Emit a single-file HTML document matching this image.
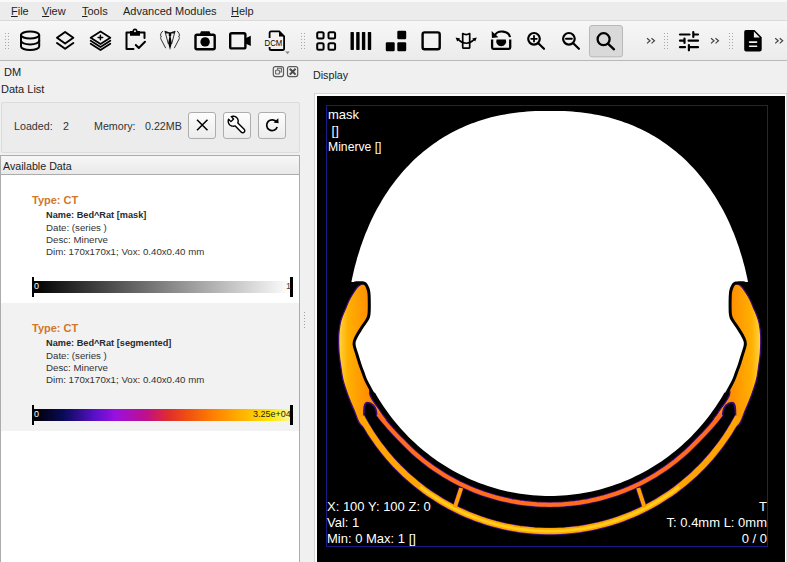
<!DOCTYPE html>
<html><head><meta charset="utf-8">
<style>
*{margin:0;padding:0;box-sizing:border-box}
html,body{width:787px;height:562px;overflow:hidden;background:#f0f0f0;font-family:"Liberation Sans",sans-serif;color:#000}
.a{position:absolute}
.t{position:absolute;white-space:nowrap;line-height:1}
#menubar{left:0;top:0;width:787px;height:20px;background:#ececec;border-top:2px solid #f8f8f8}
#menubar .t{font-size:11px;color:#1e1e1e}
#menubar u{text-decoration:underline;text-decoration-thickness:1px;text-underline-offset:0.5px;text-decoration-color:#1e1e1e}
#toolbar{left:0;top:20px;width:787px;height:41px;background:linear-gradient(#f7f7f7,#ebebeb);border-top:1px solid #dadada;border-bottom:1px solid #b8b8b8}
.btn{position:absolute;width:28px;height:27px;border:1px solid #adadad;border-radius:3px;background:linear-gradient(#fdfdfd,#ececec)}
.info{font-size:9.7px;color:#333}
.nm{font-size:9.2px;font-weight:bold;color:#2a2a2a}
.ty{font-size:11px;font-weight:bold;color:#d2762a}
.ov{position:absolute;white-space:nowrap;color:#fff;font-size:13px;line-height:1}
</style></head><body>
<div id="menubar" class="a">
 <span class="t" style="left:11px;top:4px"><u>F</u>ile</span>
 <span class="t" style="left:42px;top:4px"><u>V</u>iew</span>
 <span class="t" style="left:82px;top:4px"><u>T</u>ools</span>
 <span class="t" style="left:123px;top:4px">Advanced Modules</span>
 <span class="t" style="left:231px;top:4px"><u>H</u>elp</span>
</div>
<div id="toolbar" class="a"></div>
<!-- toolbar icons -->
<svg class="a" style="left:0;top:0" width="787" height="62" viewBox="0 0 787 62">
 <g fill="#a8a8a8">
  <rect x="5" y="33" width="1" height="1"/><rect x="8" y="33" width="1" height="1"/>
  <rect x="5" y="36" width="1" height="1"/><rect x="8" y="36" width="1" height="1"/>
  <rect x="5" y="39" width="1" height="1"/><rect x="8" y="39" width="1" height="1"/>
  <rect x="5" y="42" width="1" height="1"/><rect x="8" y="42" width="1" height="1"/>
  <rect x="5" y="45" width="1" height="1"/><rect x="8" y="45" width="1" height="1"/>
  <rect x="5" y="48" width="1" height="1"/><rect x="8" y="48" width="1" height="1"/>
  <rect x="301" y="33" width="1" height="1"/><rect x="304" y="33" width="1" height="1"/>
  <rect x="301" y="36" width="1" height="1"/><rect x="304" y="36" width="1" height="1"/>
  <rect x="301" y="39" width="1" height="1"/><rect x="304" y="39" width="1" height="1"/>
  <rect x="301" y="42" width="1" height="1"/><rect x="304" y="42" width="1" height="1"/>
  <rect x="301" y="45" width="1" height="1"/><rect x="304" y="45" width="1" height="1"/>
  <rect x="301" y="48" width="1" height="1"/><rect x="304" y="48" width="1" height="1"/>
  <rect x="664" y="33" width="1" height="1"/><rect x="667" y="33" width="1" height="1"/>
  <rect x="664" y="36" width="1" height="1"/><rect x="667" y="36" width="1" height="1"/>
  <rect x="664" y="39" width="1" height="1"/><rect x="667" y="39" width="1" height="1"/>
  <rect x="664" y="42" width="1" height="1"/><rect x="667" y="42" width="1" height="1"/>
  <rect x="664" y="45" width="1" height="1"/><rect x="667" y="45" width="1" height="1"/>
  <rect x="664" y="48" width="1" height="1"/><rect x="667" y="48" width="1" height="1"/>
  <rect x="729" y="33" width="1" height="1"/><rect x="732" y="33" width="1" height="1"/>
  <rect x="729" y="36" width="1" height="1"/><rect x="732" y="36" width="1" height="1"/>
  <rect x="729" y="39" width="1" height="1"/><rect x="732" y="39" width="1" height="1"/>
  <rect x="729" y="42" width="1" height="1"/><rect x="732" y="42" width="1" height="1"/>
  <rect x="729" y="45" width="1" height="1"/><rect x="732" y="45" width="1" height="1"/>
  <rect x="729" y="48" width="1" height="1"/><rect x="732" y="48" width="1" height="1"/>
 </g>
 <g fill="none" stroke="#000" stroke-width="2" stroke-linecap="round" stroke-linejoin="round">
  <!-- database -->
  <ellipse cx="30.1" cy="35" rx="9.1" ry="3.6"/>
  <path d="M21 35 V46.5 A9.1 3.6 0 0 0 39.2 46.5 V35"/>
  <path d="M21 40.8 A9.1 3.6 0 0 0 39.2 40.8"/>
  <!-- layers -->
  <path d="M65.1 32 L73.3 37.8 L65.1 43.5 L57 37.8 Z"/>
  <path d="M57 43 L65.1 48.7 L73.3 43"/>
  <!-- stack plus -->
  <path d="M100.5 31.5 L110.3 37.8 L100.5 44 L90.7 37.8 Z" stroke-width="1.8"/>
  <path d="M90.7 40.8 L100.5 47 L110.3 40.8" stroke-width="1.8"/>
  <path d="M90.7 43.8 L100.5 50 L110.3 43.8" stroke-width="1.8"/>
  <path d="M100.4 35.2 V39.8 M98.1 37.5 H102.7" stroke-width="1.5"/>
  <!-- clipboard -->
  <path d="M130.5 32.5 H126.5 V49 H133.5"/>
  <path d="M139.5 32.5 H144.5 V38"/>
  <path d="M135.8 45 L138.8 48 L145 41.8"/>
 </g>
 <path d="M130 31 H132.5 A2.5 2.5 0 0 1 137.5 31 H140 V35.8 H130 Z" fill="#000"/>
 <circle cx="135" cy="31.3" r="1" fill="#f2f2f2"/>
 <!-- tuxedo -->
 <g fill="none" stroke="#333" stroke-width="1" stroke-linecap="round">
  <path d="M162.6 31.2 Q160.4 33.2 160.4 35.6 L161.4 36 Q160.3 37.2 160.8 38.8 L165.5 47.8"/>
  <path d="M177.4 31.2 Q179.6 33.2 179.6 35.6 L178.6 36 Q179.7 37.2 179.2 38.8 L174.5 47.8"/>
  <path d="M165 31.4 L168.2 43.5 M175 31.4 L171.8 43.5"/>
 </g>
 <path d="M164.8 30.8 L170 32.6 L175.2 30.8 L174.6 33.6 L170 33.4 L165.4 33.6 Z" fill="#111"/>
 <path d="M168.8 32.8 H171.2 L171.3 35.5 L170.6 36.5 L171.8 43 L170 50 L168.2 43 L169.4 36.5 L168.7 35.5 Z" fill="#000"/>
 <!-- camera -->
 <rect x="195.5" y="34.7" width="19.2" height="14.5" rx="1.5" fill="none" stroke="#000" stroke-width="2.4"/>
 <path d="M199.5 35 L201 31.3 H209.5 L211 35 Z" fill="#000"/>
 <circle cx="205.1" cy="41.9" r="4.7" fill="#000"/>
 <!-- video -->
 <rect x="230.2" y="33.3" width="15.2" height="15.1" rx="1.5" fill="none" stroke="#000" stroke-width="2.4"/>
 <path d="M245 38.5 L250.8 35.7 V45.9 L245 43.2 Z" fill="#000"/>
 <!-- DCM -->
 <path d="M269.6 38 V33 A1.6 1.6 0 0 1 271.2 31.4 H279.2 L284.1 36.4 V48.4 A1.6 1.6 0 0 1 282.5 50 H271.2 A1.6 1.6 0 0 1 269.6 48.4 V47" fill="none" stroke="#000" stroke-width="1.8"/>
 <path d="M279 31.4 L284.2 36.6 H279 Z" fill="#000"/>
 <text x="264.6" y="45.7" font-family="Liberation Sans" font-size="9.4" fill="#000" stroke="#f4f4f4" stroke-width="1.6" paint-order="stroke" textLength="17.6" lengthAdjust="spacingAndGlyphs">DCM</text>
 <path d="M285.2 51.6 H289.8 L287.5 54 Z" fill="#808080"/>
 <!-- grid 2x2 -->
 <g fill="none" stroke="#000" stroke-width="2">
  <rect x="317.2" y="32.2" width="6.4" height="6.4" rx="1.5"/>
  <rect x="328.5" y="32.2" width="6.6" height="6.4" rx="1.5"/>
  <rect x="317.2" y="43.2" width="6.4" height="6.6" rx="1.5"/>
  <rect x="328.5" y="43.2" width="6.6" height="6.6" rx="1.5"/>
 </g>
 <!-- bars -->
 <g fill="#000">
  <rect x="350.5" y="32.1" width="3.4" height="17.8" rx="0.6"/>
  <rect x="356.2" y="32.1" width="3.4" height="17.8" rx="0.6"/>
  <rect x="361.9" y="32.1" width="3.4" height="17.8" rx="0.6"/>
  <rect x="367.8" y="32.1" width="3.4" height="17.8" rx="0.6"/>
  <!-- 3 squares -->
  <rect x="397.3" y="30.8" width="8.9" height="8.4" rx="1.2"/>
  <rect x="385.8" y="42.3" width="8.9" height="8.9" rx="1.2"/>
  <rect x="397.3" y="42.3" width="8.9" height="8.9" rx="1.2"/>
 </g>
 <rect x="422.6" y="32.4" width="17.1" height="16.8" rx="2" fill="none" stroke="#000" stroke-width="2.4"/>
 <!-- tilt -->
 <g fill="none" stroke="#000" stroke-width="1.7" stroke-linejoin="round">
  <path d="M462.7 33.6 V47.2 A1 1 0 0 0 463.7 48.2 H468.7 A1 1 0 0 0 469.7 47.2 V33.6 Q466.2 35.6 462.7 33.6 Z"/>
  <path d="M457.6 38.9 Q466.2 47.6 474.8 38.9" stroke-width="1.5"/>
 </g>
 <path d="M455.6 37.4 L460.2 38.4 L457.2 41.4 Z M476.8 37.4 L472.2 38.4 L475.2 41.4 Z" fill="#000"/>
 <!-- reset -->
 <path d="M492.1 39.4 V47.6 A1.2 1.2 0 0 0 493.3 48.8 H509 A1.2 1.2 0 0 0 510.2 47.6 V39.4" fill="none" stroke="#000" stroke-width="2.3"/>
 <path d="M496.6 39.4 H505.8 A5 5 0 1 1 496.6 39.4 Z" fill="#000"/>
 <path d="M494.6 35.6 A8 6.4 0 0 1 510 37.2" fill="none" stroke="#000" stroke-width="2.2"/>
 <path d="M491.6 31 L491.9 37.9 L498.4 37.3 Z" fill="#000"/>
 <!-- zoom in/out -->
 <g fill="none" stroke="#000" stroke-width="2.2" stroke-linecap="round">
  <circle cx="534" cy="38.8" r="5.8"/>
  <path d="M538.3 43.2 L544 48.8"/>
  <path d="M534 36 V41.6 M531.2 38.8 H536.8" stroke-width="1.8"/>
  <circle cx="568.9" cy="38.8" r="5.8"/>
  <path d="M573.2 43.2 L578.9 48.8"/>
  <path d="M566 38.8 H571.8" stroke-width="2"/>
 </g>
 <rect x="589.5" y="25.5" width="33" height="31.3" rx="2.5" fill="#d9d9d9" stroke="#b9b9b9" stroke-width="1"/>
 <g fill="none" stroke="#000" stroke-width="2.3" stroke-linecap="round">
  <circle cx="603.6" cy="39.2" r="6"/>
  <path d="M608.2 43.8 L614 49.3"/>
 </g>
 <!-- chevrons -->
 <g fill="none" stroke="#444" stroke-width="1.2">
  <path d="M647 38.2 L650 40.8 L647 43.4 M651.5 38.2 L654.5 40.8 L651.5 43.4"/>
  <path d="M711 38.2 L714 40.8 L711 43.4 M715.5 38.2 L718.5 40.8 L715.5 43.4"/>
  <path d="M775.2 38.2 L778.2 40.8 L775.2 43.4 M779.7 38.2 L782.7 40.8 L779.7 43.4"/>
 </g>
 <!-- sliders -->
 <g fill="none" stroke="#000" stroke-width="2.2" stroke-linecap="round">
  <path d="M680 34.5 H689.5 M693.3 32 V37 M693.3 34.5 H698"/>
  <path d="M680 40.7 H684.5 M684.5 38.6 V43 M688.6 40.7 H698"/>
  <path d="M680 47.2 H685 M688.9 45 V50.3 M688.9 47.2 H698"/>
 </g>
 <!-- doc -->
 <path d="M746 30 H754.5 L761.7 37.2 V49.5 A2 2 0 0 1 759.7 51.5 H746.2 A2 2 0 0 1 744.2 49.5 V32 A2 2 0 0 1 746 30 Z" fill="#000"/>
 <path d="M753.9 31.6 L759.8 37.5 H753.9 Z" fill="#f0f0f0"/>
 <g stroke="#f0f0f0" stroke-width="1.6" stroke-linecap="round"><path d="M749.6 42.1 H756.6 M749.6 46.2 H756.6"/></g>
</svg>

<!-- left dock -->
<div class="t" style="left:4px;top:67px;font-size:11px;color:#222">DM</div>
<svg class="a" style="left:272px;top:65px" width="28" height="13" viewBox="0 0 28 13">
 <rect x="1.3" y="1.6" width="10.2" height="10" rx="2" fill="none" stroke="#5a5a5a" stroke-width="1.2"/>
 <path d="M5.6 4.8 V3.2 H9.4 V7 H7.4" fill="none" stroke="#666" stroke-width="1.1"/>
 <rect x="3.6" y="5.2" width="3.8" height="3.8" rx="0.6" fill="none" stroke="#666" stroke-width="1.1"/>
 <rect x="15.5" y="1.6" width="10.2" height="10" rx="2" fill="none" stroke="#5a5a5a" stroke-width="1.2"/>
 <path d="M17.8 3.8 L23.6 9.6 M23.6 3.8 L17.8 9.6" stroke="#4a4a4a" stroke-width="2"/>
</svg>
<div class="t" style="left:1px;top:84px;font-size:11px;color:#222">Data List</div>
<div class="a" style="left:1px;top:102px;width:299px;height:51px;border:1px solid #dcdcdc;border-radius:2px;background:#ececec"></div>
<div class="t" style="left:14px;top:121px;font-size:10.7px;color:#333">Loaded:</div>
<div class="t" style="left:63px;top:121px;font-size:10.7px;color:#333">2</div>
<div class="t" style="left:94px;top:121px;font-size:10.7px;color:#333">Memory:</div>
<div class="t" style="left:145px;top:121px;font-size:10.7px;color:#333">0.22MB</div>
<div class="btn" style="left:188px;top:112px"></div>
<div class="btn" style="left:223px;top:112px"></div>
<div class="btn" style="left:258px;top:112px"></div>
<svg class="a" style="left:188px;top:112px" width="100" height="27" viewBox="0 0 100 27">
 <path d="M9 7.8 L19.5 18.3 M19.5 7.8 L9 18.3" stroke="#000" stroke-width="1.5"/>
 <path d="M45.62 6.94 L43.27 4.59 L44.07 4.33 L44.89 4.21 L45.73 4.23 L46.55 4.39 L47.33 4.68 L48.05 5.09 L48.70 5.63 L49.24 6.26 L49.68 6.97 L49.98 7.75 L50.16 8.56 L50.20 9.40 L50.09 10.23 L49.85 11.03 L56.16 17.33 L56.59 17.98 L56.75 18.75 L56.59 19.51 L56.16 20.16 L55.51 20.59 L54.75 20.75 L53.98 20.59 L53.33 20.16 L47.03 13.85 L46.23 14.09 L45.40 14.20 L44.56 14.16 L43.75 13.98 L42.97 13.68 L42.26 13.24 L41.63 12.70 L41.09 12.05 L40.68 11.33 L40.39 10.55 L40.23 9.73 L40.21 8.89 L40.33 8.07 L40.59 7.27 L42.94 9.62 Z" fill="#fff" stroke="#000" stroke-width="1.4" stroke-linejoin="round"/>
 <path d="M88.6 10.2 A5.4 5.4 0 1 0 89.2 15" fill="none" stroke="#000" stroke-width="1.7"/>
 <path d="M85.6 10.6 L90.6 11.2 L90.3 6.2 Z" fill="#000"/>
</svg>

<!-- available data -->
<div class="a" style="left:0;top:155px;width:300px;height:407px;background:#fff;border:1px solid #acacac;border-bottom:none"></div>
<div class="a" style="left:1px;top:156px;width:298px;height:19px;background:linear-gradient(#f7f7f7,#e9e9e9);border-bottom:1px solid #acacac"></div>
<div class="t" style="left:3px;top:161px;font-size:10.7px;color:#222">Available Data</div>
<div class="a" style="left:1px;top:175px;width:298px;height:128px;background:#fff"></div>
<div class="a" style="left:1px;top:303px;width:298px;height:128px;background:#f2f2f2"></div>

<div class="t ty" style="left:32px;top:195px">Type: CT</div>
<div class="t nm" style="left:46px;top:211px">Name: Bed^Rat [mask]</div>
<div class="t info" style="left:46px;top:223px">Date: (series )</div>
<div class="t info" style="left:46px;top:235px">Desc: Minerve</div>
<div class="t info" style="left:46px;top:247px">Dim: 170x170x1; Vox: 0.40x0.40 mm</div>
<div class="a" style="left:33px;top:281px;width:258px;height:12px;background:linear-gradient(90deg,#000,#fff)"></div>
<div class="a" style="left:32px;top:277px;width:2px;height:20px;background:#000"></div>
<div class="a" style="left:290px;top:277px;width:3px;height:20px;background:#000"></div>
<div class="t" style="left:34px;top:282px;font-size:9px;color:#fff">0</div>
<div class="t" style="left:286px;top:282px;font-size:9px;color:#444">1</div>

<div class="t ty" style="left:32px;top:323px">Type: CT</div>
<div class="t nm" style="left:46px;top:339px">Name: Bed^Rat [segmented]</div>
<div class="t info" style="left:46px;top:351px">Date: (series )</div>
<div class="t info" style="left:46px;top:363px">Desc: Minerve</div>
<div class="t info" style="left:46px;top:375px">Dim: 170x170x1; Vox: 0.40x0.40 mm</div>
<div class="a" style="left:33px;top:409px;width:258px;height:12px;background:linear-gradient(90deg,#000 0%,#0a0a5a 12%,#5a10c8 24%,#9a10e0 32%,#c0108a 44%,#e02a30 52%,#f05010 60%,#ff8a00 72%,#ffc000 84%,#ffe800 92%,#fff8a0 100%)"></div>
<div class="a" style="left:32px;top:405px;width:2px;height:20px;background:#000"></div>
<div class="a" style="left:290px;top:405px;width:3px;height:20px;background:#000"></div>
<div class="t" style="left:34px;top:410px;font-size:9px;color:#fff">0</div>
<div class="t" style="left:253px;top:410px;font-size:9px;color:#222">3.25e+04</div>

<!-- splitter -->
<div class="a" style="left:300px;top:61px;width:14px;height:501px;background:#f0f0f0"></div>
<svg class="a" style="left:303px;top:311px" width="3" height="18"><g fill="#a0a0a0"><rect x="1" y="1" width="1" height="1"/><rect x="1" y="4" width="1" height="1"/><rect x="1" y="7" width="1" height="1"/><rect x="1" y="10" width="1" height="1"/><rect x="1" y="13" width="1" height="1"/><rect x="1" y="16" width="1" height="1"/></g></svg>

<!-- display -->
<div class="t" style="left:313px;top:70px;font-size:10.7px;color:#222">Display</div>
<div class="a" style="left:314px;top:93px;width:473px;height:469px;background:#fdfdfd;border-left:1px solid #d6d6d6;border-top:1px solid #d6d6d6"></div><div class="a" style="left:786px;top:94px;width:1px;height:468px;background:#dadada"></div>
<svg class="a" style="left:317px;top:96px" width="468" height="466" viewBox="317 96 468 466">
 <rect x="317" y="96" width="468" height="466" fill="#000"/>
 <g id="img"><defs><linearGradient id="gl" gradientUnits="userSpaceOnUse" x1="338" y1="0" x2="370" y2="0"><stop offset="0" stop-color="#ffd84a"/><stop offset="0.3" stop-color="#ffb000"/><stop offset="1" stop-color="#ff8c00"/></linearGradient><linearGradient id="gr" gradientUnits="userSpaceOnUse" x1="761.4" y1="0" x2="729.4" y2="0"><stop offset="0" stop-color="#ffd84a"/><stop offset="0.3" stop-color="#ffb000"/><stop offset="1" stop-color="#ff8c00"/></linearGradient></defs>
<path d="M371.3 403.3 L373.4 406.9 L375.7 410.5 L378.3 414.1 L381.0 417.6 L383.8 421.1 L386.7 424.5 L389.6 427.8 L392.6 431.1 L395.6 434.4 L398.7 437.6 L401.8 440.7 L404.8 443.8 L407.8 446.8 L410.8 449.7 L413.9 452.6 L417.1 455.4 L420.4 458.2 L423.6 460.8 L427.0 463.4 L430.4 466.0 L433.9 468.4 L437.4 470.8 L440.9 473.1 L444.5 475.4 L448.2 477.5 L451.9 479.6 L455.6 481.6 L459.4 483.6 L463.2 485.4 L467.1 487.2 L471.0 488.9 L474.9 490.5 L478.9 492.0 L482.9 493.5 L486.9 494.8 L491.0 496.1 L495.1 497.3 L499.2 498.4 L503.3 499.4 L507.5 500.3 L511.6 501.2 L515.8 501.9 L520.0 502.6 L524.2 503.2 L528.5 503.6 L532.7 504.0 L536.9 504.4 L541.2 504.6 L545.4 504.7 L549.7 504.8 L554.0 504.7 L558.2 504.6 L562.5 504.4 L566.7 504.0 L570.9 503.6 L575.2 503.2 L579.4 502.6 L583.6 501.9 L587.8 501.2 L591.9 500.3 L596.1 499.4 L600.2 498.4 L604.3 497.3 L608.4 496.1 L612.5 494.8 L616.5 493.5 L620.5 492.0 L624.5 490.5 L628.4 488.9 L632.3 487.2 L636.2 485.4 L640.0 483.6 L643.8 481.6 L647.5 479.6 L651.2 477.5 L654.9 475.4 L658.5 473.1 L662.0 470.8 L665.5 468.4 L669.0 466.0 L672.4 463.4 L675.8 460.8 L679.0 458.2 L682.3 455.4 L685.5 452.6 L688.6 449.7 L691.6 446.8 L694.6 443.8 L697.6 440.7 L700.7 437.6 L703.8 434.4 L706.8 431.1 L709.8 427.8 L712.7 424.5 L715.6 421.1 L718.4 417.6 L721.1 414.1 L723.7 410.5 L726.0 406.9 L728.1 403.3" fill="none" stroke="#3c0a80" stroke-width="6" stroke-linejoin="round"/>
<path d="M355.0 403.7 L357.0 408.1 L359.1 412.4 L361.3 416.7 L363.6 420.9 L366.0 425.1 L368.5 429.2 L371.0 433.3 L373.7 437.3 L376.5 441.3 L379.3 445.2 L382.3 449.0 L385.3 452.8 L388.4 456.6 L391.6 460.2 L394.9 463.8 L398.3 467.4 L401.8 470.8 L405.3 474.2 L409.0 477.5 L412.7 480.7 L416.5 483.9 L420.3 486.9 L424.2 489.9 L428.2 492.8 L432.3 495.5 L436.5 498.2 L440.7 500.8 L444.9 503.3 L449.3 505.7 L453.7 508.1 L458.1 510.3 L462.6 512.4 L467.1 514.4 L471.7 516.2 L476.4 518.0 L481.1 519.7 L485.8 521.3 L490.6 522.7 L495.4 524.1 L500.2 525.3 L505.1 526.4 L510.0 527.4 L514.9 528.3 L519.8 529.1 L524.8 529.7 L529.7 530.2 L534.7 530.7 L539.7 530.9 L544.7 531.1 L549.7 531.2 L554.7 531.1 L559.7 530.9 L564.7 530.7 L569.7 530.2 L574.6 529.7 L579.6 529.1 L584.5 528.3 L589.4 527.4 L594.3 526.4 L599.2 525.3 L604.0 524.1 L608.8 522.7 L613.6 521.3 L618.3 519.7 L623.0 518.0 L627.7 516.2 L632.3 514.4 L636.8 512.4 L641.3 510.3 L645.7 508.1 L650.1 505.7 L654.5 503.3 L658.7 500.8 L662.9 498.2 L667.1 495.5 L671.2 492.8 L675.2 489.9 L679.1 486.9 L682.9 483.9 L686.7 480.7 L690.4 477.5 L694.1 474.2 L697.6 470.8 L701.1 467.4 L704.5 463.8 L707.8 460.2 L711.0 456.6 L714.1 452.8 L717.1 449.0 L720.1 445.2 L722.9 441.3 L725.7 437.3 L728.4 433.3 L730.9 429.2 L733.4 425.1 L735.8 420.9 L738.1 416.7 L740.3 412.4 L742.4 408.1 L744.4 403.7" fill="none" stroke="#3c0a80" stroke-width="8" stroke-linejoin="round"/>
<path d="M362.5 283.6 C361.8 284.1 359.5 285.0 358.0 286.5 C356.5 288.0 354.9 290.5 353.5 292.7 C352.1 294.9 350.8 297.0 349.5 299.5 C348.2 302.0 347.1 305.1 346.0 307.7 C344.9 310.3 343.8 312.4 342.8 315.0 C341.9 317.6 341.0 319.5 340.3 323.0 C339.6 326.5 338.9 331.2 338.7 336.0 C338.5 340.8 338.7 347.0 339.0 352.0 C339.3 357.0 340.0 361.2 340.7 365.9 C341.4 370.6 341.8 375.0 343.0 380.0 C344.2 385.0 346.4 391.0 348.2 396.0 C350.0 401.0 351.7 404.9 354.0 409.9 C356.3 414.9 357.7 423.3 362.0 426.0 C366.3 428.7 375.9 426.8 380.0 426.0 C384.1 425.2 386.1 422.9 386.5 421.0 C386.9 419.1 384.0 416.8 382.5 414.5 C381.0 412.2 379.2 409.4 377.5 407.0 C375.8 404.6 373.8 402.3 372.5 400.0 C371.2 397.7 369.8 396.0 369.5 393.0 C369.2 390.0 371.8 385.7 371.0 382.0 C370.2 378.3 366.5 374.2 365.0 371.0 C363.5 367.8 363.1 365.7 362.0 362.7 C360.9 359.7 359.3 356.0 358.5 353.0 C357.7 350.0 356.8 346.8 357.0 344.5 C357.2 342.2 358.5 341.6 360.0 339.2 C361.5 336.8 364.0 333.1 366.0 330.0 C368.0 326.9 370.7 323.0 372.0 320.5 C373.3 318.0 373.6 317.6 374.0 315.0 C374.4 312.4 374.5 308.7 374.5 305.0 C374.5 301.3 374.4 295.8 374.0 292.7 C373.6 289.6 373.0 287.9 372.0 286.3 C371.0 284.7 368.7 283.6 368.0 283.0 Z" fill="url(#gl)" stroke="#3c0a80" stroke-width="1.2"/>
<path d="M736.9 283.6 C737.7 284.1 739.9 285.0 741.4 286.5 C742.9 288.0 744.5 290.5 745.9 292.7 C747.3 294.9 748.7 297.0 749.9 299.5 C751.2 302.0 752.3 305.1 753.4 307.7 C754.5 310.3 755.7 312.4 756.6 315.0 C757.6 317.6 758.4 319.5 759.1 323.0 C759.8 326.5 760.5 331.2 760.7 336.0 C760.9 340.8 760.7 347.0 760.4 352.0 C760.1 357.0 759.4 361.2 758.7 365.9 C758.0 370.6 757.7 375.0 756.4 380.0 C755.2 385.0 753.0 391.0 751.2 396.0 C749.4 401.0 747.7 404.9 745.4 409.9 C743.1 414.9 741.7 423.3 737.4 426.0 C733.1 428.7 723.5 426.8 719.4 426.0 C715.3 425.2 713.3 422.9 712.9 421.0 C712.5 419.1 715.4 416.8 716.9 414.5 C718.4 412.2 720.2 409.4 721.9 407.0 C723.6 404.6 725.6 402.3 726.9 400.0 C728.2 397.7 729.7 396.0 729.9 393.0 C730.2 390.0 727.7 385.7 728.4 382.0 C729.2 378.3 732.9 374.2 734.4 371.0 C735.9 367.8 736.3 365.7 737.4 362.7 C738.5 359.7 740.1 356.0 740.9 353.0 C741.7 350.0 742.7 346.8 742.4 344.5 C742.2 342.2 740.9 341.6 739.4 339.2 C737.9 336.8 735.4 333.1 733.4 330.0 C731.4 326.9 728.7 323.0 727.4 320.5 C726.1 318.0 725.8 317.6 725.4 315.0 C725.0 312.4 724.9 308.7 724.9 305.0 C724.9 301.3 725.0 295.8 725.4 292.7 C725.8 289.6 726.4 287.9 727.4 286.3 C728.4 284.7 730.7 283.6 731.4 283.0 Z" fill="url(#gr)" stroke="#3c0a80" stroke-width="1.2"/>
<path d="M363.9 415.3 L366.2 419.4 L368.6 423.5 L371.0 427.6 L373.6 431.6 L376.2 435.6 L378.9 439.5 L381.7 443.4 L384.6 447.2 L387.6 450.9 L390.7 454.6 L393.9 458.2 L397.1 461.8 L400.5 465.3 L403.9 468.7 L407.4 472.0 L411.0 475.3 L414.6 478.4 L418.3 481.5 L422.1 484.5 L426.0 487.5 L430.0 490.3 L434.0 493.0 L438.1 495.7 L442.2 498.3 L446.4 500.7 L450.7 503.1 L455.0 505.4 L459.4 507.6 L463.8 509.6 L468.3 511.6 L472.9 513.5 L477.4 515.2 L482.0 516.9 L486.7 518.4 L491.4 519.8 L496.1 521.2 L500.9 522.4 L505.7 523.5 L510.5 524.5 L515.4 525.3 L520.2 526.1 L525.1 526.7 L530.0 527.3 L534.9 527.7 L539.8 528.0 L544.8 528.1 L549.7 528.2 L554.6 528.1 L559.6 528.0 L564.5 527.7 L569.4 527.3 L574.3 526.7 L579.2 526.1 L584.0 525.3 L588.9 524.5 L593.7 523.5 L598.5 522.4 L603.3 521.2 L608.0 519.8 L612.7 518.4 L617.4 516.9 L622.0 515.2 L626.5 513.5 L631.1 511.6 L635.6 509.6 L640.0 507.6 L644.4 505.4 L648.7 503.1 L653.0 500.7 L657.2 498.3 L661.3 495.7 L665.4 493.0 L669.4 490.3 L673.4 487.5 L677.3 484.5 L681.1 481.5 L684.8 478.4 L688.4 475.3 L692.0 472.0 L695.5 468.7 L698.9 465.3 L702.3 461.8 L705.5 458.2 L708.7 454.6 L711.8 450.9 L714.8 447.2 L717.7 443.4 L720.5 439.5 L723.2 435.6 L725.8 431.6 L728.4 427.6 L730.8 423.5 L733.2 419.4 L735.5 415.3 C735.5 408 735.4 402.5 731.9 402.5 C728.4 402.5 722.7 406 722.7 415.3 L719.9 418.8 L717.1 422.3 L714.2 425.8 L711.3 429.2 L708.3 432.5 L705.2 435.8 L702.1 439.0 L699.0 442.1 L696.1 445.2 L693.0 448.2 L690.0 451.2 L686.8 454.1 L683.6 456.9 L680.3 459.7 L677.0 462.4 L673.6 465.0 L670.2 467.6 L666.7 470.1 L663.1 472.5 L659.5 474.8 L655.9 477.1 L652.2 479.3 L648.5 481.4 L644.7 483.4 L640.9 485.4 L637.0 487.2 L633.1 489.0 L629.2 490.7 L625.2 492.4 L621.2 493.9 L617.1 495.4 L613.1 496.7 L609.0 498.0 L604.9 499.2 L600.7 500.3 L596.5 501.3 L592.3 502.3 L588.1 503.1 L583.9 503.9 L579.7 504.6 L575.4 505.1 L571.1 505.6 L566.9 506.0 L562.6 506.4 L558.3 506.6 L554.0 506.7 L549.7 506.8 L545.4 506.7 L541.1 506.6 L536.8 506.4 L532.5 506.0 L528.3 505.6 L524.0 505.1 L519.7 504.6 L515.5 503.9 L511.3 503.1 L507.1 502.3 L502.9 501.3 L498.7 500.3 L494.5 499.2 L490.4 498.0 L486.3 496.7 L482.3 495.4 L478.2 493.9 L474.2 492.4 L470.2 490.7 L466.3 489.0 L462.4 487.2 L458.5 485.4 L454.7 483.4 L450.9 481.4 L447.2 479.3 L443.5 477.1 L439.9 474.8 L436.3 472.5 L432.7 470.1 L429.2 467.6 L425.8 465.0 L422.4 462.4 L419.1 459.7 L415.8 456.9 L412.6 454.1 L409.4 451.2 L406.4 448.2 L403.3 445.2 L400.4 442.1 L397.3 439.0 L394.2 435.8 L391.1 432.5 L388.1 429.2 L385.2 425.8 L382.3 422.3 L379.5 418.8 L376.7 415.3 C376.7 406 371 402.5 367.5 402.5 C364 402.5 363.9 408 363.9 415.3 Z" fill="#000" stroke="#3c0a80" stroke-width="1.6" stroke-linejoin="round"/>
<path d="M461.2 488 L454.8 507.5" stroke="#3c0a80" stroke-width="5.4"/>
<path d="M638.2 488 L644.6 507.5" stroke="#3c0a80" stroke-width="5.4"/>
<path d="M361.3 416.7 L363.6 420.9 L366.0 425.1 L368.5 429.2 L371.0 433.3 L373.7 437.3 L376.5 441.3 L379.3 445.2 L382.3 449.0 L385.3 452.8 L388.4 456.6 L391.6 460.2 L394.9 463.8 L398.3 467.4 L401.8 470.8 L405.3 474.2 L409.0 477.5 L412.7 480.7 L416.5 483.9 L420.3 486.9 L424.2 489.9 L428.2 492.8 L432.3 495.5 L436.5 498.2 L440.7 500.8 L444.9 503.3 L449.3 505.7 L453.7 508.1 L458.1 510.3 L462.6 512.4 L467.1 514.4 L471.7 516.2 L476.4 518.0 L481.1 519.7 L485.8 521.3 L490.6 522.7 L495.4 524.1 L500.2 525.3 L505.1 526.4 L510.0 527.4 L514.9 528.3 L519.8 529.1 L524.8 529.7 L529.7 530.2 L534.7 530.7 L539.7 530.9 L544.7 531.1 L549.7 531.2 L554.7 531.1 L559.7 530.9 L564.7 530.7 L569.7 530.2 L574.6 529.7 L579.6 529.1 L584.5 528.3 L589.4 527.4 L594.3 526.4 L599.2 525.3 L604.0 524.1 L608.8 522.7 L613.6 521.3 L618.3 519.7 L623.0 518.0 L627.7 516.2 L632.3 514.4 L636.8 512.4 L641.3 510.3 L645.7 508.1 L650.1 505.7 L654.5 503.3 L658.7 500.8 L662.9 498.2 L667.1 495.5 L671.2 492.8 L675.2 489.9 L679.1 486.9 L682.9 483.9 L686.7 480.7 L690.4 477.5 L694.1 474.2 L697.6 470.8 L701.1 467.4 L704.5 463.8 L707.8 460.2 L711.0 456.6 L714.1 452.8 L717.1 449.0 L720.1 445.2 L722.9 441.3 L725.7 437.3 L728.4 433.3 L730.9 429.2 L733.4 425.1 L735.8 420.9 L738.1 416.7" fill="none" stroke="#ffa400" stroke-width="6.2" stroke-linejoin="round"/>
<path d="M378.3 414.1 L381.0 417.6 L383.8 421.1 L386.7 424.5 L389.6 427.8 L392.6 431.1 L395.6 434.4 L398.7 437.6 L401.8 440.7 L404.8 443.8 L407.8 446.8 L410.8 449.7 L413.9 452.6 L417.1 455.4 L420.4 458.2 L423.6 460.8 L427.0 463.4 L430.4 466.0 L433.9 468.4 L437.4 470.8 L440.9 473.1 L444.5 475.4 L448.2 477.5 L451.9 479.6 L455.6 481.6 L459.4 483.6 L463.2 485.4 L467.1 487.2 L471.0 488.9 L474.9 490.5 L478.9 492.0 L482.9 493.5 L486.9 494.8 L491.0 496.1 L495.1 497.3 L499.2 498.4 L503.3 499.4 L507.5 500.3 L511.6 501.2 L515.8 501.9 L520.0 502.6 L524.2 503.2 L528.5 503.6 L532.7 504.0 L536.9 504.4 L541.2 504.6 L545.4 504.7 L549.7 504.8 L554.0 504.7 L558.2 504.6 L562.5 504.4 L566.7 504.0 L570.9 503.6 L575.2 503.2 L579.4 502.6 L583.6 501.9 L587.8 501.2 L591.9 500.3 L596.1 499.4 L600.2 498.4 L604.3 497.3 L608.4 496.1 L612.5 494.8 L616.5 493.5 L620.5 492.0 L624.5 490.5 L628.4 488.9 L632.3 487.2 L636.2 485.4 L640.0 483.6 L643.8 481.6 L647.5 479.6 L651.2 477.5 L654.9 475.4 L658.5 473.1 L662.0 470.8 L665.5 468.4 L669.0 466.0 L672.4 463.4 L675.8 460.8 L679.0 458.2 L682.3 455.4 L685.5 452.6 L688.6 449.7 L691.6 446.8 L694.6 443.8 L697.6 440.7 L700.7 437.6 L703.8 434.4 L706.8 431.1 L709.8 427.8 L712.7 424.5 L715.6 421.1 L718.4 417.6 L721.1 414.1" fill="none" stroke="#ff6c1c" stroke-width="4.2" stroke-linejoin="round"/>
<path d="M420.3 486.9 L424.2 489.9 L428.2 492.8 L432.3 495.5 L436.5 498.2 L440.7 500.8 L444.9 503.3 L449.3 505.7 L453.7 508.1 L458.1 510.3 L462.6 512.4 L467.1 514.4 L471.7 516.2 L476.4 518.0 L481.1 519.7 L485.8 521.3 L490.6 522.7 L495.4 524.1 L500.2 525.3 L505.1 526.4 L510.0 527.4 L514.9 528.3 L519.8 529.1 L524.8 529.7 L529.7 530.2 L534.7 530.7 L539.7 530.9 L544.7 531.1 L549.7 531.2 L554.7 531.1 L559.7 530.9 L564.7 530.7 L569.7 530.2 L574.6 529.7 L579.6 529.1 L584.5 528.3 L589.4 527.4 L594.3 526.4 L599.2 525.3 L604.0 524.1 L608.8 522.7 L613.6 521.3 L618.3 519.7 L623.0 518.0 L627.7 516.2 L632.3 514.4 L636.8 512.4 L641.3 510.3 L645.7 508.1 L650.1 505.7 L654.5 503.3 L658.7 500.8 L662.9 498.2 L667.1 495.5 L671.2 492.8 L675.2 489.9 L679.1 486.9" fill="none" stroke="#ffce1a" stroke-width="2.8" stroke-linejoin="round"/>
<path d="M461.2 488 L454.8 507.5" stroke="#ffa000" stroke-width="4"/>
<path d="M638.2 488 L644.6 507.5" stroke="#ffa000" stroke-width="4"/>
<path d="M351.4 282.0 L352.2 278.0 L353.1 274.0 L354.0 270.1 L354.9 266.2 L356.0 262.4 L357.0 258.6 L358.1 254.9 L359.3 251.2 L360.4 247.5 L361.7 243.9 L363.0 240.3 L364.3 236.8 L365.6 233.3 L367.1 229.9 L368.5 226.5 L370.0 223.1 L371.5 219.8 L373.1 216.5 L374.7 213.3 L376.4 210.1 L378.1 207.0 L379.9 203.9 L381.7 200.8 L383.5 197.8 L385.4 194.8 L387.3 191.9 L389.2 189.1 L391.2 186.2 L393.3 183.5 L395.3 180.7 L397.5 178.0 L399.6 175.4 L401.8 172.8 L404.0 170.3 L406.3 167.8 L408.6 165.4 L410.9 163.0 L413.3 160.6 L415.7 158.3 L418.2 156.1 L420.7 153.9 L423.2 151.8 L425.8 149.7 L428.4 147.7 L431.0 145.7 L433.7 143.7 L436.4 141.9 L439.1 140.0 L441.9 138.3 L444.7 136.5 L447.5 134.9 L450.4 133.3 L453.3 131.7 L456.3 130.2 L459.3 128.8 L462.3 127.4 L465.3 126.0 L468.4 124.8 L471.5 123.5 L474.7 122.4 L477.9 121.2 L481.1 120.2 L484.4 119.2 L487.7 118.2 L491.0 117.3 L494.4 116.5 L497.8 115.7 L501.3 115.0 L504.8 114.4 L508.4 113.7 L512.0 113.2 L515.7 112.7 L519.4 112.3 L523.2 111.9 L527.1 111.6 L531.1 111.3 L535.3 111.1 L539.6 111.0 L544.2 110.9 L549.7 110.9 L555.2 110.9 L559.8 111.0 L564.1 111.1 L568.3 111.3 L572.3 111.6 L576.2 111.9 L580.0 112.3 L583.7 112.7 L587.4 113.2 L591.0 113.7 L594.6 114.4 L598.1 115.0 L601.6 115.7 L605.0 116.5 L608.4 117.3 L611.7 118.2 L615.0 119.2 L618.3 120.2 L621.5 121.2 L624.7 122.4 L627.9 123.5 L631.0 124.8 L634.1 126.0 L637.1 127.4 L640.1 128.8 L643.1 130.2 L646.1 131.7 L649.0 133.3 L651.9 134.9 L654.7 136.5 L657.5 138.3 L660.3 140.0 L663.0 141.9 L665.7 143.7 L668.4 145.7 L671.0 147.7 L673.6 149.7 L676.2 151.8 L678.7 153.9 L681.2 156.1 L683.7 158.3 L686.1 160.6 L688.5 163.0 L690.8 165.4 L693.1 167.8 L695.4 170.3 L697.6 172.8 L699.8 175.4 L701.9 178.0 L704.1 180.7 L706.1 183.5 L708.2 186.2 L710.2 189.1 L712.1 191.9 L714.0 194.8 L715.9 197.8 L717.7 200.8 L719.5 203.9 L721.3 207.0 L723.0 210.1 L724.7 213.3 L726.3 216.5 L727.9 219.8 L729.4 223.1 L730.9 226.5 L732.3 229.9 L733.8 233.3 L735.1 236.8 L736.4 240.3 L737.7 243.9 L739.0 247.5 L740.1 251.2 L741.3 254.9 L742.4 258.6 L743.4 262.4 L744.5 266.2 L745.4 270.1 L746.3 274.0 L747.2 278.0 L748.0 282.0 L746.5 282.0 C745.7 281.9 743.8 281.2 741.7 281.2 C739.7 281.2 736.0 281.1 734.2 282.0 C732.4 282.9 731.7 284.5 730.8 286.3 C729.9 288.1 729.4 289.6 729.0 292.7 C728.6 295.8 728.6 301.3 728.6 305.0 C728.6 308.7 728.6 312.4 729.0 315.0 C729.4 317.6 729.6 318.0 731.0 320.5 C732.4 323.0 735.5 326.9 737.4 330.0 C739.4 333.1 741.6 336.8 742.7 339.2 C743.8 341.6 744.0 342.2 743.8 344.5 C743.6 346.8 742.3 350.0 741.4 353.0 C740.5 356.0 739.4 359.7 738.4 362.7 C737.4 365.7 736.5 368.1 735.4 371.0 C734.3 373.9 733.7 376.4 732.0 380.0 C730.3 383.6 726.3 390.7 725.1 392.8 L724.5 392.5 L722.4 396.2 L720.1 399.9 L717.8 403.5 L715.5 407.0 L713.0 410.6 L710.5 414.0 L707.9 417.4 L705.3 420.8 L702.6 424.1 L699.8 427.3 L696.9 430.5 L694.0 433.6 L691.1 436.7 L688.0 439.7 L684.9 442.6 L681.8 445.5 L678.6 448.2 L675.3 451.0 L672.0 453.6 L668.6 456.2 L665.1 458.7 L661.7 461.2 L658.1 463.5 L654.5 465.8 L650.9 468.0 L647.2 470.2 L643.5 472.2 L639.7 474.2 L635.9 476.1 L632.1 477.9 L628.2 479.7 L624.3 481.3 L620.3 482.9 L616.4 484.3 L612.3 485.7 L608.3 487.0 L604.2 488.3 L600.1 489.4 L596.0 490.4 L591.9 491.4 L587.7 492.3 L583.5 493.0 L579.3 493.7 L575.1 494.3 L570.9 494.8 L566.7 495.2 L562.4 495.6 L558.2 495.8 L553.9 495.9 L549.7 496.0 L545.5 495.9 L541.2 495.8 L537.0 495.6 L532.7 495.2 L528.5 494.8 L524.3 494.3 L520.1 493.7 L515.9 493.0 L511.7 492.3 L507.5 491.4 L503.4 490.4 L499.3 489.4 L495.2 488.3 L491.1 487.0 L487.1 485.7 L483.0 484.3 L479.1 482.9 L475.1 481.3 L471.2 479.7 L467.3 477.9 L463.5 476.1 L459.7 474.2 L455.9 472.2 L452.2 470.2 L448.5 468.0 L444.9 465.8 L441.3 463.5 L437.7 461.2 L434.3 458.7 L430.8 456.2 L427.4 453.6 L424.1 451.0 L420.8 448.2 L417.6 445.5 L414.5 442.6 L411.4 439.7 L408.3 436.7 L405.4 433.6 L402.5 430.5 L399.6 427.3 L396.8 424.1 L394.1 420.8 L391.5 417.4 L388.9 414.0 L386.4 410.6 L383.9 407.0 L381.6 403.5 L379.3 399.9 L377.0 396.2 L374.9 392.5 L374.3 392.8 C373.1 390.7 369.1 383.6 367.4 380.0 C365.7 376.4 365.1 373.9 364.0 371.0 C362.9 368.1 362.0 365.7 361.0 362.7 C360.0 359.7 358.9 356.0 358.0 353.0 C357.1 350.0 355.8 346.8 355.6 344.5 C355.4 342.2 355.6 341.6 356.7 339.2 C357.8 336.8 360.1 333.1 362.0 330.0 C363.9 326.9 367.0 323.0 368.4 320.5 C369.8 318.0 370.0 317.6 370.4 315.0 C370.8 312.4 370.8 308.7 370.8 305.0 C370.8 301.3 370.8 295.8 370.4 292.7 C370.0 289.6 369.5 288.1 368.6 286.3 C367.7 284.5 367.0 282.9 365.2 282.0 C363.4 281.1 359.8 281.2 357.7 281.2 C355.6 281.2 353.7 281.9 352.9 282.0 Z" fill="none" stroke="#000" stroke-width="6" stroke-linejoin="round"/>
<path d="M351.4 282.0 L352.2 278.0 L353.1 274.0 L354.0 270.1 L354.9 266.2 L356.0 262.4 L357.0 258.6 L358.1 254.9 L359.3 251.2 L360.4 247.5 L361.7 243.9 L363.0 240.3 L364.3 236.8 L365.6 233.3 L367.1 229.9 L368.5 226.5 L370.0 223.1 L371.5 219.8 L373.1 216.5 L374.7 213.3 L376.4 210.1 L378.1 207.0 L379.9 203.9 L381.7 200.8 L383.5 197.8 L385.4 194.8 L387.3 191.9 L389.2 189.1 L391.2 186.2 L393.3 183.5 L395.3 180.7 L397.5 178.0 L399.6 175.4 L401.8 172.8 L404.0 170.3 L406.3 167.8 L408.6 165.4 L410.9 163.0 L413.3 160.6 L415.7 158.3 L418.2 156.1 L420.7 153.9 L423.2 151.8 L425.8 149.7 L428.4 147.7 L431.0 145.7 L433.7 143.7 L436.4 141.9 L439.1 140.0 L441.9 138.3 L444.7 136.5 L447.5 134.9 L450.4 133.3 L453.3 131.7 L456.3 130.2 L459.3 128.8 L462.3 127.4 L465.3 126.0 L468.4 124.8 L471.5 123.5 L474.7 122.4 L477.9 121.2 L481.1 120.2 L484.4 119.2 L487.7 118.2 L491.0 117.3 L494.4 116.5 L497.8 115.7 L501.3 115.0 L504.8 114.4 L508.4 113.7 L512.0 113.2 L515.7 112.7 L519.4 112.3 L523.2 111.9 L527.1 111.6 L531.1 111.3 L535.3 111.1 L539.6 111.0 L544.2 110.9 L549.7 110.9 L555.2 110.9 L559.8 111.0 L564.1 111.1 L568.3 111.3 L572.3 111.6 L576.2 111.9 L580.0 112.3 L583.7 112.7 L587.4 113.2 L591.0 113.7 L594.6 114.4 L598.1 115.0 L601.6 115.7 L605.0 116.5 L608.4 117.3 L611.7 118.2 L615.0 119.2 L618.3 120.2 L621.5 121.2 L624.7 122.4 L627.9 123.5 L631.0 124.8 L634.1 126.0 L637.1 127.4 L640.1 128.8 L643.1 130.2 L646.1 131.7 L649.0 133.3 L651.9 134.9 L654.7 136.5 L657.5 138.3 L660.3 140.0 L663.0 141.9 L665.7 143.7 L668.4 145.7 L671.0 147.7 L673.6 149.7 L676.2 151.8 L678.7 153.9 L681.2 156.1 L683.7 158.3 L686.1 160.6 L688.5 163.0 L690.8 165.4 L693.1 167.8 L695.4 170.3 L697.6 172.8 L699.8 175.4 L701.9 178.0 L704.1 180.7 L706.1 183.5 L708.2 186.2 L710.2 189.1 L712.1 191.9 L714.0 194.8 L715.9 197.8 L717.7 200.8 L719.5 203.9 L721.3 207.0 L723.0 210.1 L724.7 213.3 L726.3 216.5 L727.9 219.8 L729.4 223.1 L730.9 226.5 L732.3 229.9 L733.8 233.3 L735.1 236.8 L736.4 240.3 L737.7 243.9 L739.0 247.5 L740.1 251.2 L741.3 254.9 L742.4 258.6 L743.4 262.4 L744.5 266.2 L745.4 270.1 L746.3 274.0 L747.2 278.0 L748.0 282.0 L746.5 282.0 C745.7 281.9 743.8 281.2 741.7 281.2 C739.7 281.2 736.0 281.1 734.2 282.0 C732.4 282.9 731.7 284.5 730.8 286.3 C729.9 288.1 729.4 289.6 729.0 292.7 C728.6 295.8 728.6 301.3 728.6 305.0 C728.6 308.7 728.6 312.4 729.0 315.0 C729.4 317.6 729.6 318.0 731.0 320.5 C732.4 323.0 735.5 326.9 737.4 330.0 C739.4 333.1 741.6 336.8 742.7 339.2 C743.8 341.6 744.0 342.2 743.8 344.5 C743.6 346.8 742.3 350.0 741.4 353.0 C740.5 356.0 739.4 359.7 738.4 362.7 C737.4 365.7 736.5 368.1 735.4 371.0 C734.3 373.9 733.7 376.4 732.0 380.0 C730.3 383.6 726.3 390.7 725.1 392.8 L724.5 392.5 L722.4 396.2 L720.1 399.9 L717.8 403.5 L715.5 407.0 L713.0 410.6 L710.5 414.0 L707.9 417.4 L705.3 420.8 L702.6 424.1 L699.8 427.3 L696.9 430.5 L694.0 433.6 L691.1 436.7 L688.0 439.7 L684.9 442.6 L681.8 445.5 L678.6 448.2 L675.3 451.0 L672.0 453.6 L668.6 456.2 L665.1 458.7 L661.7 461.2 L658.1 463.5 L654.5 465.8 L650.9 468.0 L647.2 470.2 L643.5 472.2 L639.7 474.2 L635.9 476.1 L632.1 477.9 L628.2 479.7 L624.3 481.3 L620.3 482.9 L616.4 484.3 L612.3 485.7 L608.3 487.0 L604.2 488.3 L600.1 489.4 L596.0 490.4 L591.9 491.4 L587.7 492.3 L583.5 493.0 L579.3 493.7 L575.1 494.3 L570.9 494.8 L566.7 495.2 L562.4 495.6 L558.2 495.8 L553.9 495.9 L549.7 496.0 L545.5 495.9 L541.2 495.8 L537.0 495.6 L532.7 495.2 L528.5 494.8 L524.3 494.3 L520.1 493.7 L515.9 493.0 L511.7 492.3 L507.5 491.4 L503.4 490.4 L499.3 489.4 L495.2 488.3 L491.1 487.0 L487.1 485.7 L483.0 484.3 L479.1 482.9 L475.1 481.3 L471.2 479.7 L467.3 477.9 L463.5 476.1 L459.7 474.2 L455.9 472.2 L452.2 470.2 L448.5 468.0 L444.9 465.8 L441.3 463.5 L437.7 461.2 L434.3 458.7 L430.8 456.2 L427.4 453.6 L424.1 451.0 L420.8 448.2 L417.6 445.5 L414.5 442.6 L411.4 439.7 L408.3 436.7 L405.4 433.6 L402.5 430.5 L399.6 427.3 L396.8 424.1 L394.1 420.8 L391.5 417.4 L388.9 414.0 L386.4 410.6 L383.9 407.0 L381.6 403.5 L379.3 399.9 L377.0 396.2 L374.9 392.5 L374.3 392.8 C373.1 390.7 369.1 383.6 367.4 380.0 C365.7 376.4 365.1 373.9 364.0 371.0 C362.9 368.1 362.0 365.7 361.0 362.7 C360.0 359.7 358.9 356.0 358.0 353.0 C357.1 350.0 355.8 346.8 355.6 344.5 C355.4 342.2 355.6 341.6 356.7 339.2 C357.8 336.8 360.1 333.1 362.0 330.0 C363.9 326.9 367.0 323.0 368.4 320.5 C369.8 318.0 370.0 317.6 370.4 315.0 C370.8 312.4 370.8 308.7 370.8 305.0 C370.8 301.3 370.8 295.8 370.4 292.7 C370.0 289.6 369.5 288.1 368.6 286.3 C367.7 284.5 367.0 282.9 365.2 282.0 C363.4 281.1 359.8 281.2 357.7 281.2 C355.6 281.2 353.7 281.9 352.9 282.0 Z" fill="#fff"/></g>
 <rect x="326.5" y="105.5" width="441" height="441" fill="none" stroke="#1a1a8a" stroke-width="1"/>
</svg>
<div class="ov" style="left:328px;top:108px">mask</div>
<div class="ov" style="left:328px;top:124px">&nbsp;[]</div>
<div class="ov" style="left:328px;top:140px;font-size:12.2px;top:140.5px">Minerve []</div>
<div class="ov" style="left:327px;top:500px">X: 100 Y: 100 Z: 0</div>
<div class="ov" style="left:327px;top:516px">Val: 1</div>
<div class="ov" style="left:327px;top:532px">Min: 0 Max: 1 []</div>
<div class="ov" style="right:20px;top:500px">T</div>
<div class="ov" style="right:20px;top:516px">T: 0.4mm L: 0mm</div>
<div class="ov" style="right:20px;top:532px">0 / 0</div>
</body></html>
